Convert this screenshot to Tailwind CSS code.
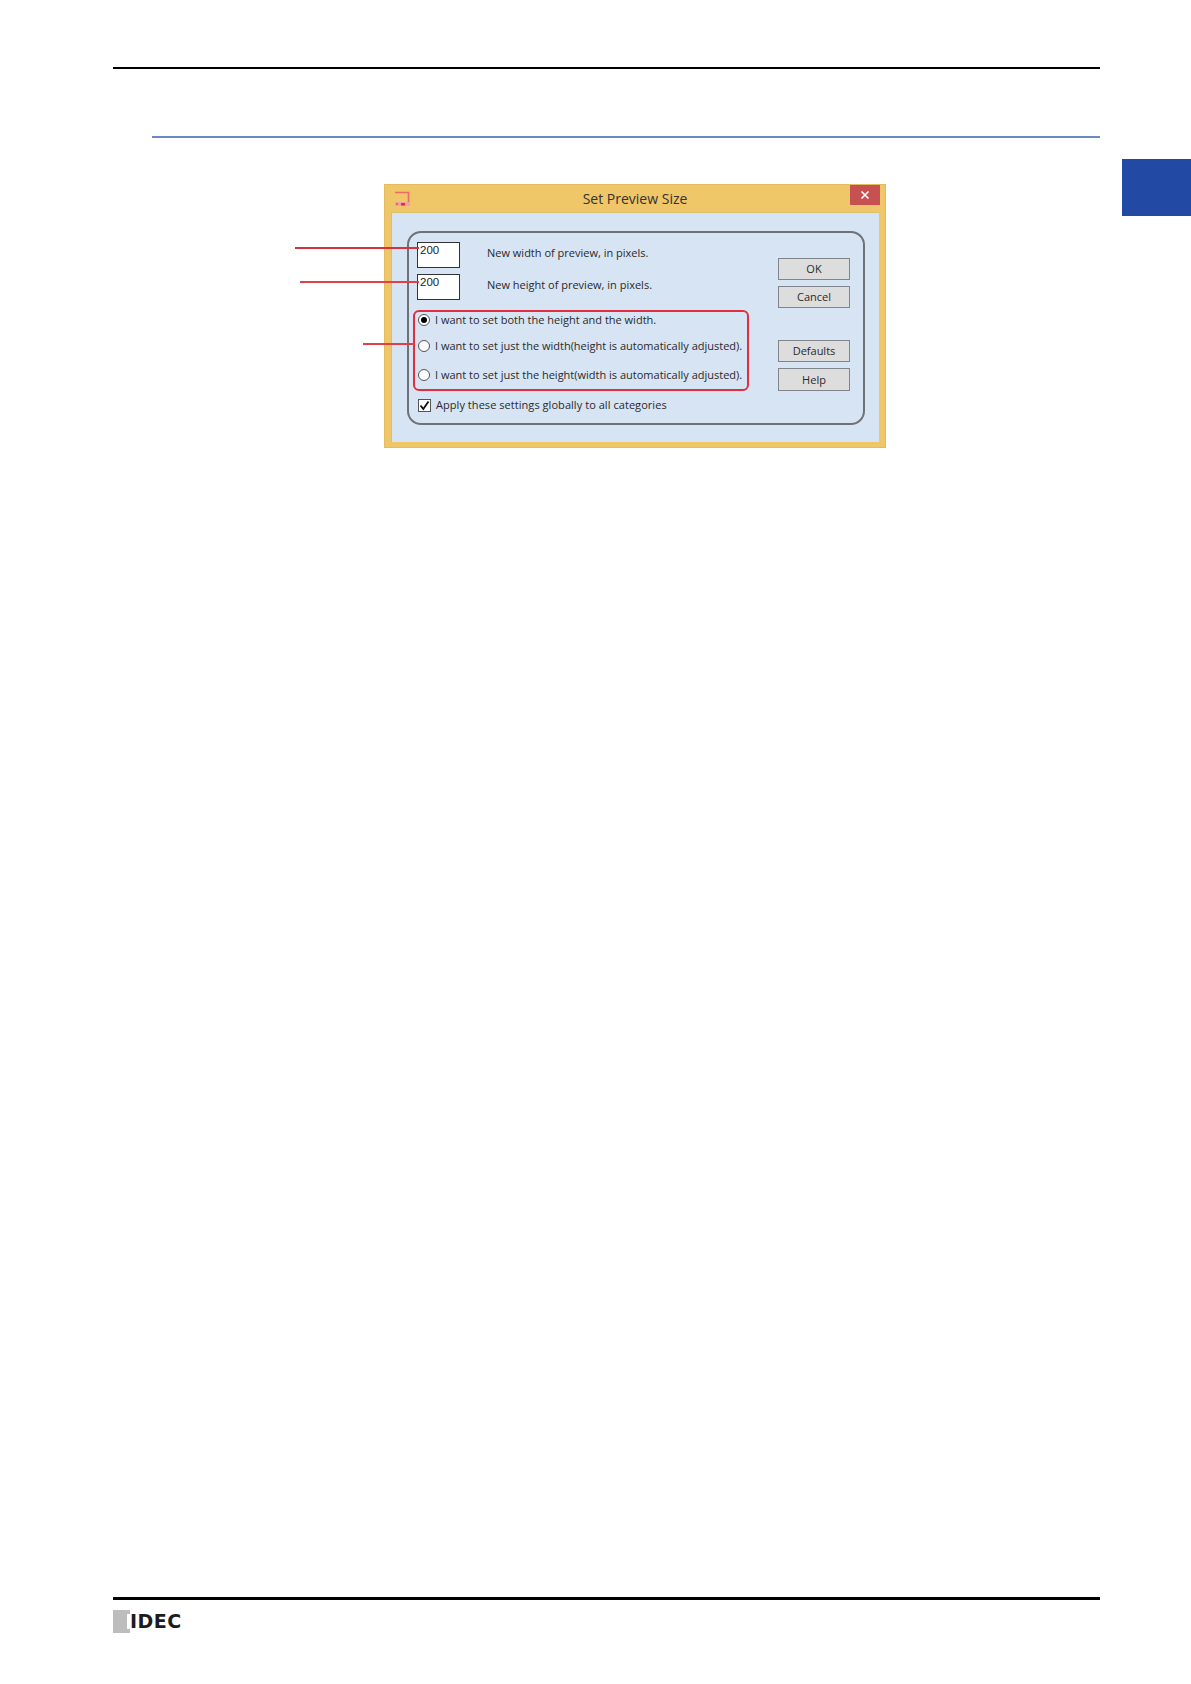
<!DOCTYPE html>
<html>
<head>
<meta charset="utf-8">
<script src="https://cdn.jsdelivr.net/npm/@tailwindcss/browser@4"></script>
</head>
<body class="bg-white">
<div class="relative w-[1191px] h-[1684px] bg-white flex flex-col font-['Open_Sans',sans-serif] text-[#2a2a2a] overflow-hidden">
  <div class="mt-[67px] ml-[113px] w-[987px] h-[2px] bg-black"></div>
  <div class="mt-[67px] ml-[152px] w-[948px] h-[2px] bg-[#6b88c8]"></div>

  <!-- margin tab -->
  <div class="absolute right-0 top-[159px] w-[69px] h-[57px] bg-[#2249a3]"></div>

  <!-- dialog -->
  <div class="mt-[46px] ml-[384px] w-[502px] h-[264px] bg-[#efc668] border border-[#e3bb60] flex flex-col">
    <div class="relative h-[28px] shrink-0 flex items-center justify-center text-[14px] text-[#333] -mt-[1px]">
      <svg class="absolute left-[8px] top-[7px]" width="18" height="16" viewBox="0 0 18 16">
        <path d="M2 1.5H15.5V15" fill="none" stroke="#ee6a62" stroke-width="1.6"/>
        <rect x="2" y="11" width="14" height="4" fill="#f4a0a0"/>
        <rect x="8" y="12" width="4" height="2.5" fill="#d8304a"/>
        <rect x="3" y="12" width="2" height="2" fill="#e8606c"/>
      </svg>
      <span>Set Preview Size</span>
      <div class="absolute right-[5px] top-[1px] w-[30px] h-[20px] bg-[#c75050] flex items-center justify-center">
        <svg width="10" height="10" viewBox="0 0 10 10"><path d="M1.5 1.5L8.5 8.5M8.5 1.5L1.5 8.5" stroke="#fff" stroke-width="1.6"/></svg>
      </div>
    </div>
    <div class="ml-[6px] w-[488px] h-[230px] bg-[#d7e4f3] border-t border-l border-[#d9c070] pt-[18px] pl-[15px]">
      <div class="w-[458px] h-[194px] border-2 border-[#6f7179] rounded-[14px] flex text-[11px] leading-[16px] whitespace-nowrap">
        <div class="w-[369px] flex flex-col">
          <div class="flex items-center mt-[9px] ml-[8px]">
            <div class="w-[43px] h-[26px] bg-white border border-[#333] pl-[2px] font-['Liberation_Sans',sans-serif] text-[11.5px] leading-[14px] text-[#222]">200</div>
            <span class="ml-[27px] -mt-[4px]">New width of preview, in pixels.</span>
          </div>
          <div class="flex items-center mt-[6px] ml-[8px]">
            <div class="w-[43px] h-[26px] bg-white border border-[#333] pl-[2px] font-['Liberation_Sans',sans-serif] text-[11.5px] leading-[14px] text-[#222]">200</div>
            <span class="ml-[27px] -mt-[4px]">New height of preview, in pixels.</span>
          </div>
          <div class="mt-[10px] ml-[4px] w-[336px] h-[81px] border-2 border-[#e0303f] rounded-[6px] flex flex-col pl-[3px]">
            <div class="flex items-center h-[16px]">
              <span class="shrink-0 w-[12px] h-[12px] rounded-full bg-white border border-[#555] flex items-center justify-center"><span class="w-[6px] h-[6px] rounded-full bg-black"></span></span>
              <span class="ml-[5px]">I want to set both the height and the width.</span>
            </div>
            <div class="flex items-center h-[16px] mt-[10px]">
              <span class="shrink-0 w-[12px] h-[12px] rounded-full bg-white border border-[#555]"></span>
              <span class="ml-[5px]">I want to set just the width(height is automatically adjusted).</span>
            </div>
            <div class="flex items-center h-[16px] mt-[13px]">
              <span class="shrink-0 w-[12px] h-[12px] rounded-full bg-white border border-[#555]"></span>
              <span class="ml-[5px]">I want to set just the height(width is automatically adjusted).</span>
            </div>
          </div>
          <div class="flex items-center h-[16px] mt-[6px] ml-[9px]">
            <span class="shrink-0 w-[13px] h-[13px] bg-white border border-[#555] flex items-center justify-center">
              <svg width="11" height="11" viewBox="0 0 11 11"><path d="M1.5 5.5L4.3 9L9.5 1.5" fill="none" stroke="#111" stroke-width="1.9"/></svg>
            </span>
            <span class="ml-[5px] tracking-[0.05px]">Apply these settings globally to all categories</span>
          </div>
        </div>
        <div class="w-[72px] flex flex-col pt-[25px]">
          <div class="h-[22px] bg-[#dddddd] border border-[#80858c] flex items-center justify-center">OK</div>
          <div class="h-[22px] mt-[6px] bg-[#dddddd] border border-[#80858c] flex items-center justify-center">Cancel</div>
          <div class="h-[22px] mt-[32px] bg-[#dddddd] border border-[#80858c] flex items-center justify-center">Defaults</div>
          <div class="h-[23px] mt-[6px] bg-[#dddddd] border border-[#80858c] flex items-center justify-center">Help</div>
        </div>
      </div>
    </div>
  </div>

  <!-- callout lines -->
  <div class="absolute left-[295px] top-[247px] w-[124px] h-[2px] bg-[#d8303c]"></div>
  <div class="absolute left-[300px] top-[281px] w-[119px] h-[2px] bg-[#e0404a]"></div>
  <div class="absolute left-[363px] top-[343px] w-[51px] h-[2px] bg-[#e0404a]"></div>

  <!-- footer -->
  <div class="mt-auto mb-[51px] ml-[113px] flex flex-col">
    <div class="w-[987px] h-[3px] bg-black"></div>
    <div class="mt-[10px] flex items-center h-[23px]">
      <div class="w-[17px] h-[23px] bg-[#bdbdbd] flex justify-end items-center"><div class="w-[3px] h-[15px] bg-white"></div></div>
      <span class="font-['DejaVu_Sans',sans-serif] font-bold text-[19px] tracking-[0.5px] leading-[23px] text-[#1c1c1c]">IDEC</span>
    </div>
  </div>
</div>
</body>
</html>
